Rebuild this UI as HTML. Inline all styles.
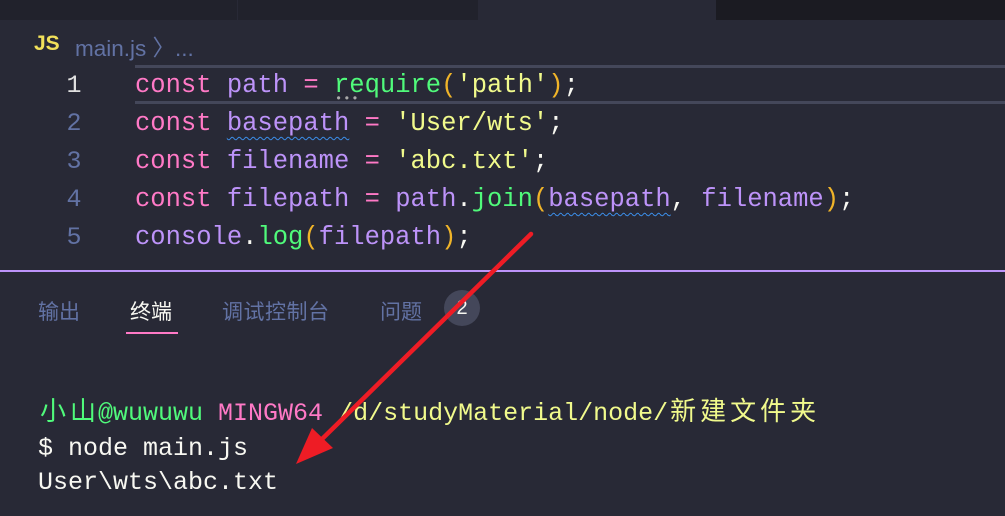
<!DOCTYPE html>
<html><head><meta charset="utf-8"><style>
body{margin:0;width:1005px;height:516px;background:#282936;overflow:hidden;position:relative;font-family:"Liberation Mono","Noto Sans CJK SC",monospace}
.a{position:absolute;white-space:pre}
.code{font-size:25.5px;line-height:38px}
.k{color:#ff79c6}.v{color:#bd93f9}.f{color:#50fa7b}.s{color:#f1fa8c}.p{color:#f8f8f2}.b{color:#f0b429}
.w{text-decoration:underline wavy #3b8eea;text-decoration-thickness:1px;text-underline-offset:6px}
.ln{color:#6272a4;font-size:25px;width:40px;text-align:center}
.t{font-family:"Liberation Sans","Noto Sans CJK SC",sans-serif;font-size:21px;color:#6272a4}
.term{font-size:25px;line-height:34.5px}
.cj{display:inline-block;width:30px;text-align:center;font-size:26px}
</style></head><body>
<div class="a" style="left:0;top:0;width:237px;height:20px;background:#21222c"></div>
<div class="a" style="left:238px;top:0;width:240px;height:20px;background:#21222c"></div>
<div class="a" style="left:716px;top:0;width:289px;height:20px;background:#1b1b22"></div>
<div class="a" style="left:34px;top:32px;font-size:21px;color:#f1e05a;font-weight:bold;font-family:'Liberation Sans',sans-serif">JS</div>
<div class="a" style="left:75px;top:31px;font-size:22.5px;color:#6272a4;font-family:'Liberation Sans',sans-serif">main.js 〉...</div>
<div class="a" style="left:135px;top:65px;width:870px;height:33px;border-top:3px solid #44475a;border-bottom:3px solid #44475a"></div>
<div class="a ln" style="left:54px;top:67px;line-height:38px;color:#e0e0e0">1</div>
<div class="a ln" style="left:54px;top:105px;line-height:38px">2</div>
<div class="a ln" style="left:54px;top:143px;line-height:38px">3</div>
<div class="a ln" style="left:54px;top:181px;line-height:38px">4</div>
<div class="a ln" style="left:54px;top:219px;line-height:38px">5</div>
<div class="a code" style="left:135px;top:67px"><span class="k">const</span> <span class="v">path</span> <span class="k">=</span> <span class="f">require</span><span class="b">(</span><span class="s">'path'</span><span class="b">)</span><span class="p">;</span>
<span class="k">const</span> <span class="v w">basepath</span> <span class="k">=</span> <span class="s">'User/wts'</span><span class="p">;</span>
<span class="k">const</span> <span class="v">filename</span> <span class="k">=</span> <span class="s">'abc.txt'</span><span class="p">;</span>
<span class="k">const</span> <span class="v">filepath</span> <span class="k">=</span> <span class="v">path</span><span class="p">.</span><span class="f">join</span><span class="b">(</span><span class="v w">basepath</span><span class="p">,</span> <span class="v">filename</span><span class="b">)</span><span class="p">;</span>
<span class="v">console</span><span class="p">.</span><span class="f">log</span><span class="b">(</span><span class="v">filepath</span><span class="b">)</span><span class="p">;</span></div>
<div class="a" style="left:335px;top:92px;color:#aaa;font-size:12px;letter-spacing:1px">•••</div>
<div class="a" style="left:0;top:270px;width:1005px;height:2px;background:#bd93f9"></div>
<div class="a t" style="left:38px;top:296px">输出</div>
<div class="a t" style="left:130px;top:296px;color:#f8f8f2">终端</div>
<div class="a" style="left:126px;top:332px;width:52px;height:2px;background:#ff79c6"></div>
<div class="a t" style="left:222px;top:296px;letter-spacing:0.5px">调试控制台</div>
<div class="a t" style="left:380px;top:296px">问题</div>
<div class="a" style="left:444px;top:290px;width:36px;height:36px;border-radius:18px;background:#44475a;color:#f8f8f2;font:20px 'Liberation Sans',sans-serif;text-align:center;line-height:36px">2</div>
<div class="a term" style="left:38px;top:396px"><span style="color:#50fa7b"><span class="cj">小</span><span class="cj">山</span>@wuwuwu</span> <span class="k">MINGW64</span> <span class="s">/d/studyMaterial/node/<span class="cj">新</span><span class="cj">建</span><span class="cj">文</span><span class="cj">件</span><span class="cj">夹</span></span>
<span class="p">$ node main.js</span>
<span class="p">User\wts\abc.txt</span></div>
<svg class="a" style="left:0;top:0" width="1005" height="516"><line x1="531" y1="234" x2="318" y2="443" stroke="#ee1c25" stroke-width="4.5" stroke-linecap="round"/><polygon points="296,464 312,428 333,448" fill="#ee1c25"/></svg>
</body></html>
